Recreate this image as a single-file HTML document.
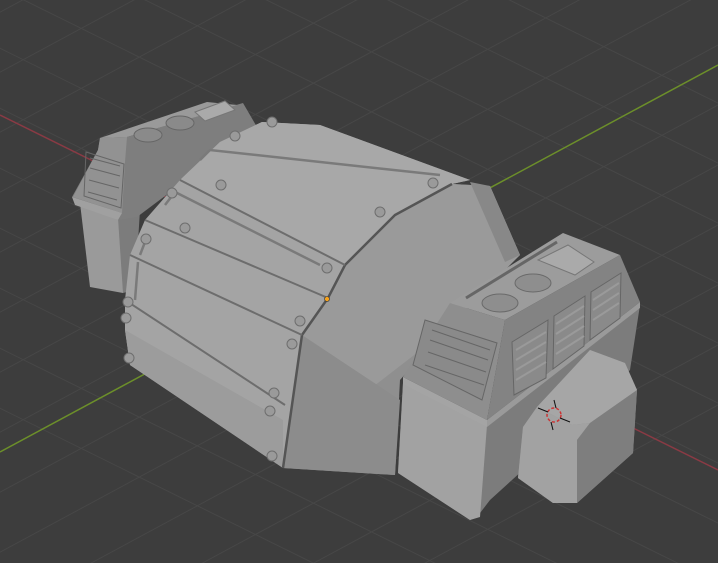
<!DOCTYPE html>
<html><head><meta charset="utf-8"><style>html,body{margin:0;padding:0;background:#3d3d3d;overflow:hidden;width:718px;height:563px}svg{display:block;overflow:hidden}</style></head><body>
<svg width="718" height="563" viewBox="0 0 718 563" xmlns="http://www.w3.org/2000/svg">
<defs><clipPath id="c"><rect width="718" height="563"/></clipPath></defs>
<g clip-path="url(#c)">
<rect width="718" height="563" fill="#3d3d3d"/>
<g stroke="#474747" stroke-width="1">
<line x1="-300" y1="-40" x2="900" y2="553"/><line x1="-300" y1="20" x2="900" y2="613"/><line x1="-300" y1="-100" x2="900" y2="493"/><line x1="-300" y1="-160" x2="900" y2="433"/><line x1="-300" y1="-220" x2="900" y2="373"/><line x1="-300" y1="-280" x2="900" y2="313"/><line x1="-300" y1="-340" x2="900" y2="253"/><line x1="-300" y1="-400" x2="900" y2="193"/><line x1="-300" y1="80" x2="900" y2="673"/><line x1="-300" y1="140" x2="900" y2="733"/><line x1="-300" y1="200" x2="900" y2="793"/><line x1="-300" y1="260" x2="900" y2="853"/>
<line x1="-200" y1="120" x2="900" y2="-473"/><line x1="-200" y1="180" x2="900" y2="-413"/><line x1="-200" y1="240" x2="900" y2="-353"/><line x1="-200" y1="300" x2="900" y2="-293"/><line x1="-200" y1="360" x2="900" y2="-233"/><line x1="-200" y1="420" x2="900" y2="-173"/><line x1="-200" y1="480" x2="900" y2="-113"/><line x1="-200" y1="540" x2="900" y2="-53"/><line x1="-200" y1="600" x2="900" y2="7"/><line x1="-200" y1="660" x2="900" y2="67"/><line x1="-200" y1="720" x2="900" y2="127"/><line x1="-200" y1="780" x2="900" y2="187"/><line x1="-200" y1="840" x2="900" y2="247"/><line x1="-200" y1="900" x2="900" y2="307"/>
</g>
<line x1="0" y1="115" x2="718" y2="470" stroke="#8a3a44" stroke-width="1.5"/>
<line x1="0" y1="452" x2="718" y2="65" stroke="#6c8f2a" stroke-width="1.5"/>
<!-- left box -->
<polygon points="80,203 118,218 125,240 123,293 90,287" fill="#9a9a9a"/>
<polygon points="118,218 140,210 135,290 123,293" fill="#7c7c7c"/>
<polygon points="72,197 98,150 100,138 127,137 243,103 257,127 137,217 118,220 80,205" fill="#7e7e7e"/>
<polygon points="100,138 98,150 73,197 122,213 125,162 127,137" fill="#929292"/>
<polygon points="100,138 207,102 237,105 127,137" fill="#9a9a9a"/>
<polygon points="72,197 122,213 118,220 75,205" fill="#a0a0a0"/>
<polygon points="86,152 124,164 121,208 84,196" fill="none" stroke="#666"/>
<g stroke="#666"><line x1="90" y1="158" x2="120" y2="166"/><line x1="90" y1="168" x2="120" y2="176"/><line x1="89" y1="180" x2="119" y2="188"/><line x1="88" y1="192" x2="117" y2="200"/></g>
<ellipse cx="148" cy="135" rx="14" ry="7" fill="#8a8a8a" stroke="#666"/>
<ellipse cx="180" cy="123" rx="14" ry="7" fill="#8a8a8a" stroke="#666"/>
<polygon points="195,112 225,101 235,110 205,121" fill="#aaa" stroke="#777"/>
<!-- right back face -->
<polygon points="452,184 490,186 520,255 470,300 400,380 395,475 283,468 302,335 328,298 345,265 395,215" fill="#8f8f8f"/>
<polygon points="302,335 328,298 345,265 395,215 452,184 490,186 520,255 440,335 330,420" fill="#9a9a9a"/>
<polygon points="470,182 490,186 520,255 505,262" fill="#888"/>
<polygon points="283,468 302,335 400,400 395,475" fill="#8c8c8c"/>
<!-- main front face -->
<polygon points="125,300 130,255 145,220 180,180 220,142 262,122 320,125 470,180 452,184 395,215 345,265 328,298 302,335 283,468 130,365 125,330" fill="#a4a4a4"/>
<polygon points="220,142 262,122 320,125 470,180 452,184 395,215 345,265 180,180" fill="#a8a8a8"/>
<polygon points="125,330 283,420 283,468 130,365" fill="#9c9c9c"/>
<path d="M452,184 L395,215 L345,265 L328,298 L302,335 L283,468" fill="none" stroke="#555" stroke-width="2.5"/>
<path d="M180,180 L345,265 M145,220 L328,298 M130,255 L302,335 M125,300 L285,405" fill="none" stroke="#6d6d6d" stroke-width="2"/>
<g fill="none" stroke="#7a7a7a" stroke-width="2.5"><path d="M200,160 L210,150 L440,175"/><path d="M165,205 L175,192 L320,265"/><path d="M140,255 L145,242"/><path d="M135,300 L138,262"/></g>
<g fill="#9a9a9a" stroke="#6e6e6e"><circle cx="221" cy="185" r="5"/><circle cx="185" cy="228" r="5"/><circle cx="172" cy="193" r="5"/><circle cx="146" cy="239" r="5"/><circle cx="128" cy="302" r="5"/><circle cx="126" cy="318" r="5"/><circle cx="129" cy="358" r="5"/><circle cx="327" cy="268" r="5"/><circle cx="300" cy="321" r="5"/><circle cx="292" cy="344" r="5"/><circle cx="274" cy="393" r="5"/><circle cx="270" cy="411" r="5"/><circle cx="272" cy="456" r="5"/><circle cx="380" cy="212" r="5"/><circle cx="433" cy="183" r="5"/><circle cx="235" cy="136" r="5"/><circle cx="272" cy="122" r="5"/></g>
<!-- right box -->
<polygon points="403,383 487,425 640,305 630,370 600,400 490,500 477,517 470,520 398,473" fill="#7c7c7c"/>
<polygon points="403,383 487,425 480,517 470,520 398,473" fill="#a2a2a2"/>
<polygon points="403,377 450,303 505,320 487,420" fill="#8e8e8e"/>
<polygon points="450,303 563,233 620,255 505,320" fill="#9c9c9c"/>
<polygon points="505,320 620,255 640,302 487,420" fill="#838383"/>
<polygon points="403,377 487,420 487,427 403,384" fill="#a4a4a4"/>
<polygon points="487,420 640,302 640,308 487,427" fill="#9a9a9a"/>
<polygon points="425,320 497,343 482,400 413,365" fill="#8a8a8a" stroke="#666"/>
<g stroke="#666"><line x1="432" y1="330" x2="490" y2="350"/><line x1="430" y1="340" x2="488" y2="360"/><line x1="428" y1="352" x2="486" y2="372"/><line x1="425" y1="365" x2="484" y2="385"/></g>
<g fill="#8a8a8a" stroke="#666"><polygon points="512,342 548,320 546,378 514,395"/><polygon points="554,316 585,296 584,346 553,369"/><polygon points="591,292 621,273 620,318 590,340"/></g>
<g stroke="#9a9a9a" stroke-width="2"><line x1="516" y1="350" x2="546" y2="332"/><line x1="516" y1="360" x2="546" y2="342"/><line x1="516" y1="370" x2="546" y2="352"/><line x1="516" y1="380" x2="546" y2="362"/><line x1="556" y1="324" x2="584" y2="306"/><line x1="556" y1="334" x2="584" y2="316"/><line x1="556" y1="344" x2="584" y2="326"/><line x1="556" y1="354" x2="584" y2="336"/><line x1="593" y1="300" x2="619" y2="283"/><line x1="593" y1="310" x2="619" y2="293"/><line x1="593" y1="320" x2="619" y2="303"/></g>
<line x1="466" y1="298" x2="557" y2="242" stroke="#666" stroke-width="3"/>
<ellipse cx="500" cy="303" rx="18" ry="9" fill="#8e8e8e" stroke="#6a6a6a"/>
<ellipse cx="533" cy="283" rx="18" ry="9" fill="#8e8e8e" stroke="#6a6a6a"/>
<polygon points="538,260 568,245 594,262 575,275" fill="#aaa" stroke="#777"/>
<!-- small box -->
<polygon points="537,407 590,350 625,363 637,390 633,453 577,503 553,503 518,478 523,427" fill="#8e8e8e"/>
<polygon points="537,407 590,350 625,363 637,390 590,423 572,425" fill="#a6a6a6"/>
<polygon points="523,427 537,407 572,425 590,423 577,440 577,503 553,503 518,478" fill="#a2a2a2"/>
<polygon points="577,440 590,423 637,390 633,453 577,503" fill="#7e7e7e"/>
<circle cx="554" cy="415" r="7" fill="none" stroke="#c33" stroke-width="1.5" stroke-dasharray="3,2"/>
<g stroke="#111" stroke-width="1"><line x1="538" y1="408" x2="548" y2="412"/><line x1="560" y1="418" x2="570" y2="422"/><line x1="554" y1="400" x2="556" y2="408"/><line x1="551" y1="422" x2="553" y2="430"/></g>
<circle cx="327" cy="299" r="2.5" fill="#f7a21b" stroke="#333" stroke-width="0.6"/>
</g>
</svg>
</body></html>
